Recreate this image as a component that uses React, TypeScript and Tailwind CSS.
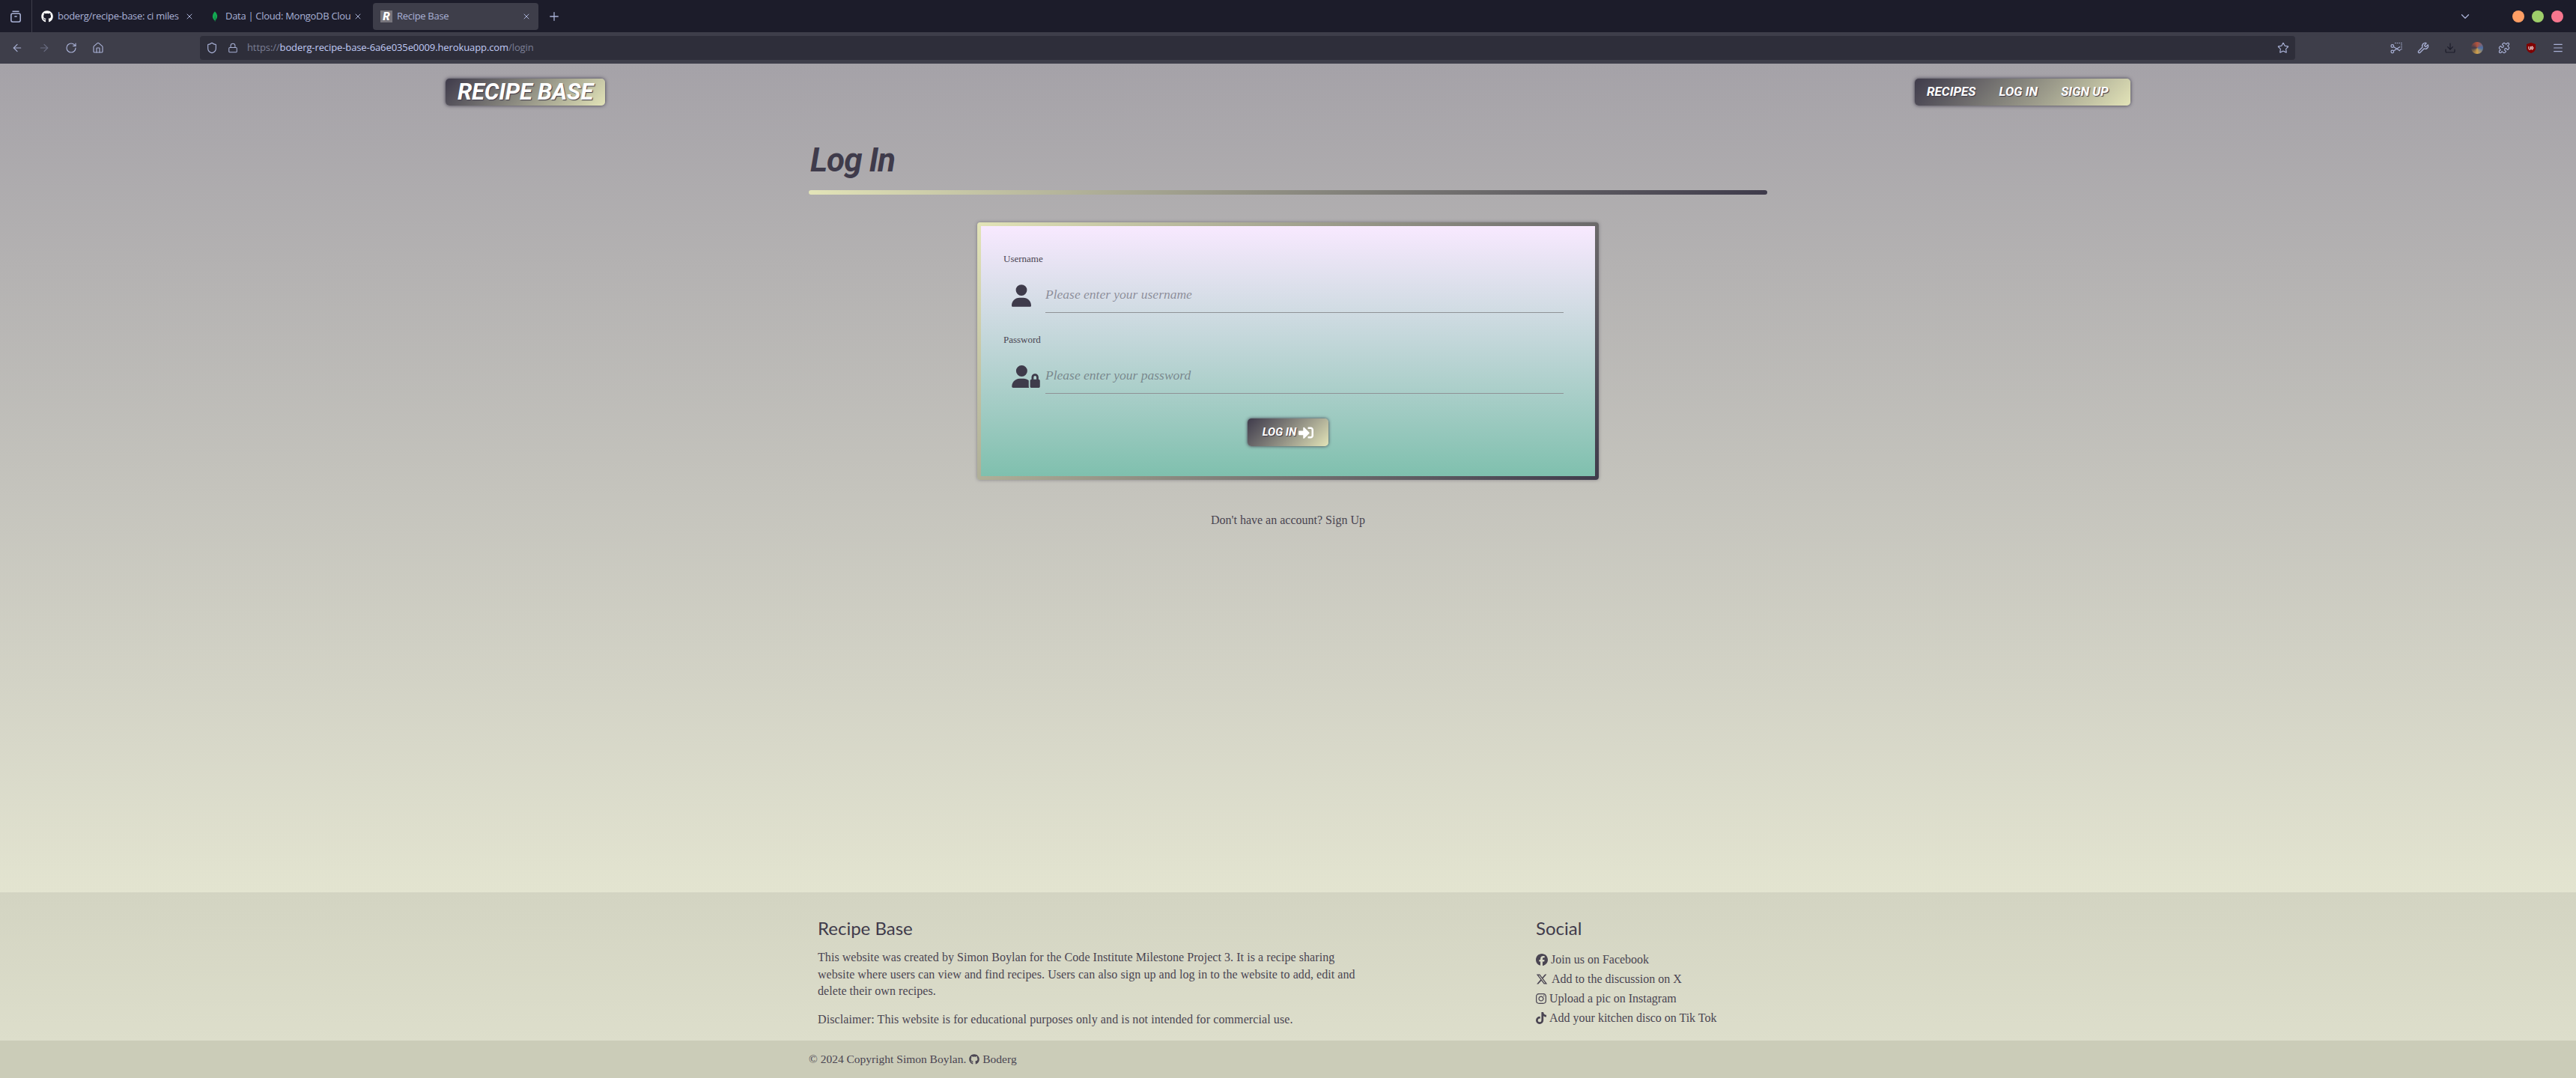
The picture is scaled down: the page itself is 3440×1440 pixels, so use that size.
import { ArrowLeft, ArrowRight, ChevronDown, Download, Home, Lock, Menu, Plus, Puzzle, RotateCw, Shield, Star, Wrench, X } from "lucide-react";
import { FaFacebook, FaGithub, FaInstagram, FaTiktok, FaUser, FaUserLock, FaXTwitter } from "react-icons/fa6";
import { FaSignInAlt } from "react-icons/fa";
import { SiMongodb } from "react-icons/si";

const socials = [
  { icon: <FaFacebook className="w-4 h-4 mr-1" />, text: "Join us on Facebook" },
  { icon: <FaXTwitter className="w-4 h-4 mr-[5px]" />, text: "Add to the discussion on X" },
  { icon: <FaInstagram className="w-[14px] h-4 mr-[4px]" />, text: "Upload a pic on Instagram" },
  { icon: <FaTiktok className="w-[14px] h-4 mr-[4px]" />, text: "Add your kitchen disco on Tik Tok" },
];

const Tab = ({ icon, title, active, width }: { icon: React.ReactNode; title: string; active?: boolean; width: string }) => (
  <div className={`${width} h-[36px] flex items-center pl-[10px] pr-[10px] rounded-[4px] ${active ? "bg-[#3e3e4a]" : ""}`}>
    <span className="w-[16px] h-[16px] flex items-center justify-center shrink-0">{icon}</span>
    <span className="flex-1 min-w-0 ml-[6px] text-[13px] text-[#a9b1d6] whitespace-nowrap overflow-hidden font-['Open_Sans',sans-serif] tracking-[-0.3px]">
      {title}
    </span>
    <X className="w-[12px] h-[12px] ml-[2px] text-[#a9b1d6] shrink-0" />
  </div>
);

const Field = ({ label, icon, placeholder, type }: { label: string; icon: React.ReactNode; placeholder: string; type: string }) => (
  <div className="mb-[27px]">
    <label className="block h-[18px] leading-[18px] text-[13px] text-[#4a4552]">{label}</label>
    <div className="flex h-[63px]">
      <div className="w-[56px] pl-[11px] pt-[25px] text-[#3f3b4b] shrink-0">{icon}</div>
      <input
        type={type}
        placeholder={placeholder}
        className="flex-1 self-end h-[46px] pb-[3px] border-b border-[#8f9296] bg-transparent outline-none text-[17.5px] italic placeholder:text-[#3f3b4b80]"
      />
    </div>
  </div>
);

const App = () => {
  return (
    <div className="w-full h-[1440px] flex flex-col overflow-hidden font-['Liberation_Serif',serif] text-[#4a4552]">
      {/* browser tabs */}
      <div className="h-[43px] shrink-0 bg-[#1c1c2a] flex items-center text-[#a9b1d6]">
        <div className="w-[43px] h-full border-r border-[#3e3e4a] flex items-center justify-center">
          <svg viewBox="0 0 16 16" className="w-[18px] h-[18px]" fill="none" stroke="currentColor" strokeWidth="1.4">
            <rect x="2.5" y="4.5" width="11" height="10" rx="2" />
            <path d="M4 2h8M6.500 8h3" />
          </svg>
        </div>
        <div className="ml-[2px]">
          <Tab width="w-[224px]" icon={<FaGithub className="w-[16px] h-[16px] text-white" />} title="boderg/recipe-base: ci miles" />
        </div>
        <Tab width="w-[225px]" icon={<SiMongodb className="w-[14px] h-[16px] text-[#13aa52]" />} title="Data | Cloud: MongoDB Clou" />
        <div className="ml-[4px]">
          <Tab
            width="w-[221px]"
            active
            icon={<span className="w-[16px] h-[16px] bg-[#77757c] text-white font-['Roboto',sans-serif] font-black italic text-[15px] leading-[16px] text-center">R</span>}
            title="Recipe Base"
          />
        </div>
        <Plus className="w-[18px] h-[18px] ml-[12px]" strokeWidth={1.75} />
        <ChevronDown className="w-[18px] h-[18px] ml-auto" strokeWidth={1.75} />
        <div className="flex gap-[10px] ml-[54px] mr-[17px]">
          <span className="w-[16px] h-[16px] rounded-full bg-[#ff9e64]" />
          <span className="w-[16px] h-[16px] rounded-full bg-[#9ece6a]" />
          <span className="w-[16px] h-[16px] rounded-full bg-[#f7768e]" />
        </div>
      </div>

      {/* browser toolbar */}
      <div className="h-[42px] shrink-0 bg-[#3e3e4a] flex items-center text-[#a9b1d6]">
        <div className="w-[267px] flex items-center gap-[20px] pl-[15px]">
          <ArrowLeft className="w-[16px] h-[16px]" strokeWidth={1.75} />
          <ArrowRight className="w-[16px] h-[16px] opacity-40" strokeWidth={1.75} />
          <RotateCw className="w-[16px] h-[16px]" strokeWidth={1.75} />
          <Home className="w-[16px] h-[16px]" strokeWidth={1.75} />
        </div>
        <div className="flex-1 h-[32px] bg-[#2e2e3a] rounded-[4px] flex items-center pl-[8px] pr-[8px]">
          <Shield className="w-[16px] h-[16px]" strokeWidth={1.75} />
          <Lock className="w-[14px] h-[16px] ml-[13px]" strokeWidth={1.75} />
          <span className="ml-[12px] text-[13px] font-['Open_Sans',sans-serif] tracking-[-0.1px] text-[#7b7f95]">
            https://<span className="text-[#c0caf5]">boderg-recipe-base-6a6e035e0009.herokuapp.com</span>/login
          </span>
          <Star className="w-[16px] h-[16px] ml-auto" strokeWidth={1.75} />
        </div>
        <div className="w-[375px] shrink-0 flex items-center justify-end gap-[20px] pr-[16px]">
          <svg viewBox="0 0 16 16" className="w-[16px] h-[16px]" fill="none" stroke="currentColor" strokeWidth="1.2">
            <path d="M6 1.500h9v9h-3" strokeDasharray="1.500 1.200" />
            <circle cx="2.800" cy="5.500" r="1.800" />
            <circle cx="2.800" cy="13" r="1.800" />
            <path d="M4.400 6.500L13 12M4.400 12L13 6.500" />
          </svg>
          <Wrench className="w-[16px] h-[16px]" strokeWidth={2} />
          <Download className="w-[16px] h-[16px] text-[#1c1c2a]" strokeWidth={1.75} />
          <span className="w-[16px] h-[16px] rounded-full bg-[conic-gradient(#b5533c,#4a6fa5,#d4a24c,#3f3b4b,#b5533c)]" />
          <Puzzle className="w-[16px] h-[16px]" strokeWidth={1.75} />
          <svg viewBox="0 0 16 16" className="w-[16px] h-[16px]">
            <path d="M8 1l6 2v5c0 4-3 6-6 7-3-1-6-3-6-7V3z" fill="#800000" />
            <path d="M5 6v3a1.300 1.300 0 002.600 0V6M9 6v4.200c2.500 0 2.500-4.200 0-4.200z" fill="none" stroke="#fff" strokeWidth="1" />
          </svg>
          <Menu className="w-[16px] h-[16px]" strokeWidth={1.75} />
        </div>
      </div>

      {/* page */}
      <main className="flex-1 min-h-0 bg-linear-to-b from-[#a5a2a8] to-[#e3e4d0]">
        <header className="w-[2250px] mx-auto pt-[20px] flex justify-between items-center font-['Roboto',sans-serif] italic font-bold text-white [text-shadow:1px_1px_1px_#3f3b4b]">
          <div className="w-[213px] h-[36px] rounded-[5px] bg-linear-135 from-[#3f3b4b] to-[#e3e4b8] shadow-[0_0_5px_#3f3b4b] flex items-center justify-center text-[31px] tracking-[-0.2px]">
            RECIPE BASE
          </div>
          <nav className="w-[288px] h-[36px] rounded-[5px] bg-linear-135 from-[#3f3b4b] to-[#e3e4b8] shadow-[0_0_5px_#3f3b4b] flex items-center pl-[16px] gap-[31px] text-[17px]">
            <span>RECIPES</span>
            <span>LOG IN</span>
            <span>SIGN UP</span>
          </nav>
        </header>

        <section className="w-[1280px] mx-auto pt-[48px]">
          <h1 className="h-[56px] pl-[2px] leading-[50px] text-[44px] tracking-[-1px] font-['Roboto',sans-serif] italic font-bold text-[#3f3b4b]">Log In</h1>
          <div className="h-[6px] mt-[9px] rounded-full bg-linear-to-r from-[#e3e4b8] to-[#3f3b4b]" />

          <div className="w-[830px] mx-auto mt-[37px] p-[5px] rounded-[4px] bg-linear-135 from-[#e3e4b8] to-[#3f3b4b] shadow-[0_0_4px_#3f3b4b80]">
            <form className="h-[334px] pt-[35px] pl-[30px] pr-[42px] bg-linear-to-b from-[#f8e9ff] to-[#7fc0ae]">
              <Field label="Username" type="text" placeholder="Please enter your username" icon={<FaUser className="w-[26px] h-[30px]" />} />
              <Field label="Password" type="password" placeholder="Please enter your password" icon={<FaUserLock className="w-[38px] h-[30px]" />} />
              <div className="flex justify-center mt-[33px] pl-[12px]">
                <button
                  type="button"
                  className="w-[108px] h-[37px] rounded-[5px] bg-linear-135 from-[#3f3b4b] to-[#e3e4b8] shadow-[0_0_4px_#3f3b4b] flex items-center justify-center gap-[3px] font-['Roboto',sans-serif] italic font-bold text-[15px] text-white [text-shadow:1px_1px_1px_#3f3b4b]"
                >
                  LOG IN <FaSignInAlt className="w-[20px] h-[20px]" />
                </button>
              </div>
            </form>
          </div>

          <p className="mt-[42px] h-[24px] leading-[24px] text-center text-[16px]">Don't have an account? Sign Up</p>
        </section>
      </main>

      {/* footer */}
      <footer className="h-[198px] shrink-0 bg-linear-to-b from-[#d3d4c2] to-[#dddecb]">
        <div className="w-[1280px] mx-auto pl-[12px] pt-[32px] flex">
          <div className="w-[959px] shrink-0">
            <h5 className="h-[32px] leading-[32px] text-[24px] font-['Lato',sans-serif] text-[#3f3b4b]">Recipe Base</h5>
            <p className="w-[730px] mt-[12px] text-[16px] leading-[22.5px] tracking-[0.06px]">
              This website was created by Simon Boylan for the Code Institute Milestone Project 3. It is a recipe sharing website where users can view and find recipes. Users can also sign up and log in to the website to add, edit and delete their own recipes.
            </p>
            <p className="mt-[15px] text-[16px] leading-[22.5px] tracking-[0.1px]">Disclaimer: This website is for educational purposes only and is not intended for commercial use.</p>
          </div>
          <div>
            <h5 className="h-[32px] leading-[32px] text-[24px] font-['Lato',sans-serif] text-[#3f3b4b]">Social</h5>
            <ul className="mt-[13px] text-[16px] leading-[26px]">
              {socials.map((s) => (
                <li key={s.text} className="flex items-center">
                  {s.icon}
                  {s.text}
                </li>
              ))}
            </ul>
          </div>
        </div>
      </footer>
      <div className="h-[50px] shrink-0 bg-[#cbccb8]">
        <div className="w-[1280px] mx-auto h-full flex items-center text-[15.5px]">
          © 2024 Copyright Simon Boylan.
          <FaGithub className="w-[14px] h-[14px] mx-[4px]" /> Boderg
        </div>
      </div>
    </div>
  );
};

export default App;
